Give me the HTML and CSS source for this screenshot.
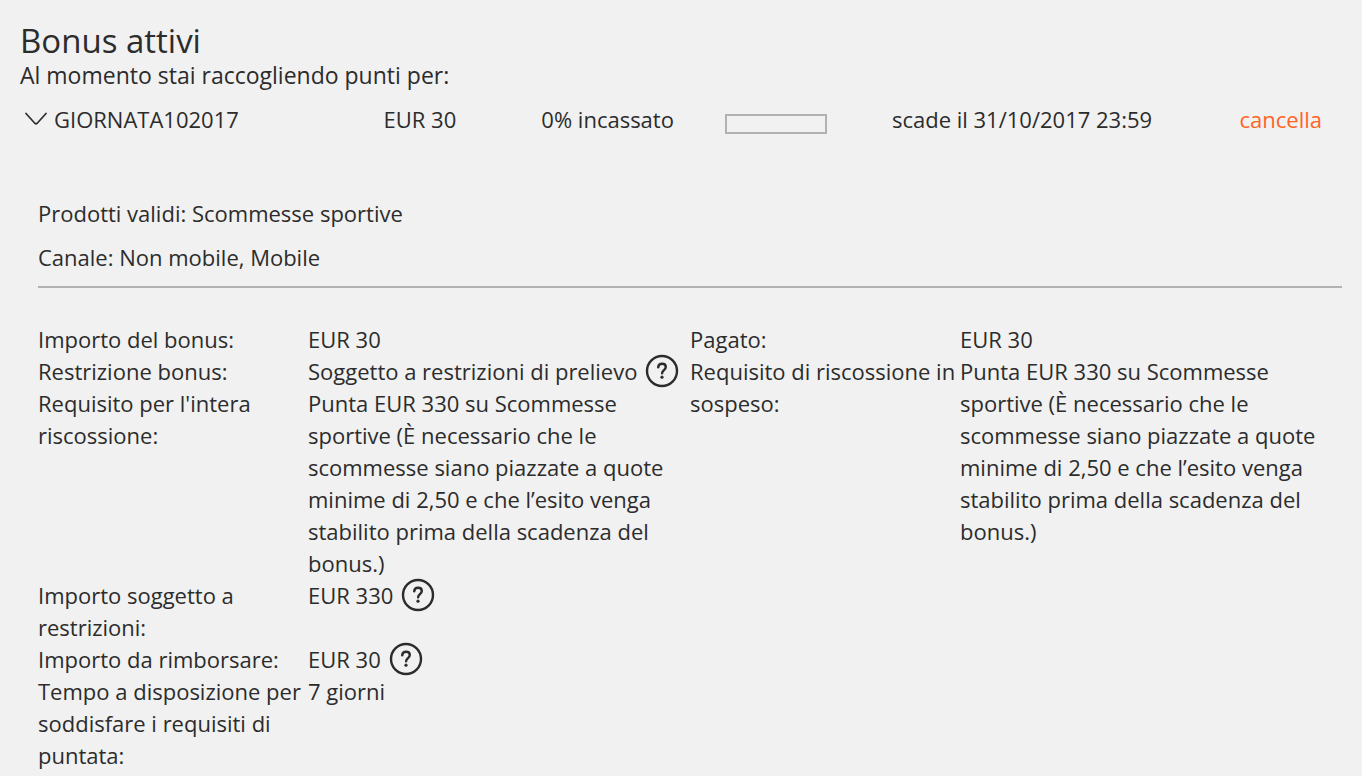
FILE: index.html
```html
<!DOCTYPE html>
<html lang="it">
<head>
<meta charset="utf-8">
<meta name="viewport" content="width=device-width, initial-scale=1">
<title>Bonus attivi</title>
<link rel="stylesheet" href="styles.css">
</head>
<body>
<svg class="sprite" aria-hidden="true">
  <symbol id="help" viewBox="0 0 34 34">
    <circle cx="17" cy="17" r="15" fill="none" stroke="currentColor" stroke-width="2.400"/>
    <path d="M13.200 13.400C13.300 11 14.800 9.800 17.100 9.800c2.300 0 3.700 1.300 3.700 3.200 0 3-3.700 3.100-3.700 6.200" fill="none" stroke="currentColor" stroke-width="2.400" stroke-linecap="round"/>
    <circle cx="17" cy="23.200" r="1.600" fill="currentColor"/>
  </symbol>
</svg>
<main class="page">
  <h1 class="title">Bonus attivi</h1>
  <p class="intro">Al momento stai raccogliendo punti per:</p>

  <section class="bonus">
    <div class="summary">
      <button class="toggle" type="button" aria-expanded="true" aria-controls="details">
        <svg class="chevron" viewBox="0 0 22 14" aria-hidden="true"><path d="M1 1.500 9.800 11.200Q11 12.400 12.200 11.200L21 1.500" fill="none" stroke="currentColor" stroke-width="1.700" stroke-linecap="round"/></svg>
        <span>GIORNATA102017</span>
      </button>
      <span>EUR 30</span>
      <span id="progress-label">0% incassato</span>
      <div class="meter" role="progressbar" aria-labelledby="progress-label" aria-valuenow="0" aria-valuemin="0" aria-valuemax="100"></div>
      <span>scade il 31/10/2017 23:59</span>
      <a class="cancel" href="#">cancella</a>
    </div>

    <div class="details" id="details">
      <p class="scope">Prodotti validi: Scommesse sportive</p>
      <p class="scope">Canale: Non mobile, Mobile</p>
      <hr class="rule">
      <div class="columns">
        <dl class="terms">
          <dt>Importo del bonus:</dt>
          <dd>EUR 30</dd>
          <dt>Restrizione bonus:</dt>
          <dd class="with-help">Soggetto a restrizioni di prelievo <button class="help" type="button" aria-label="Aiuto"><svg class="help-icon" aria-hidden="true"><use href="#help"/></svg></button></dd>
          <dt>Requisito per l'intera riscossione:</dt>
          <dd>Punta EUR 330 su Scommesse sportive (È necessario che le scommesse siano piazzate a quote minime di 2,50 e che l’esito venga stabilito prima della scadenza del bonus.)</dd>
          <dt>Importo soggetto a restrizioni:</dt>
          <dd class="with-help">EUR 330 <button class="help" type="button" aria-label="Aiuto"><svg class="help-icon" aria-hidden="true"><use href="#help"/></svg></button></dd>
          <dt>Importo da rimborsare:</dt>
          <dd class="with-help">EUR 30 <button class="help" type="button" aria-label="Aiuto"><svg class="help-icon" aria-hidden="true"><use href="#help"/></svg></button></dd>
          <dt>Tempo a disposizione per soddisfare i requisiti di puntata:</dt>
          <dd>7 giorni</dd>
        </dl>
        <dl class="terms">
          <dt>Pagato:</dt>
          <dd>EUR 30</dd>
          <dt>Requisito di riscossione in sospeso:</dt>
          <dd>Punta EUR 330 su Scommesse sportive (È necessario che le scommesse siano piazzate a quote minime di 2,50 e che l’esito venga stabilito prima della scadenza del bonus.)</dd>
        </dl>
      </div>
    </div>
  </section>
</main>
</body>
</html>
```
FILE: styles.css
```css
* {
  box-sizing: border-box;
  margin: 0;
  padding: 0;
}

body {
  background: #f1f1f1;
  color: #2c2c2c;
  font: 22px/32px "Open Sans", "Noto Sans", sans-serif;
}

button {
  border: 0;
  background: none;
  color: inherit;
  font: inherit;
  cursor: pointer;
}

.sprite {
  display: none;
}

.page {
  padding: 22px 20px 4px;
}

.title {
  font-size: 33px;
  font-weight: 400;
  line-height: 38px;
}

.intro {
  font-size: 23px;
  line-height: 30px;
}

.summary {
  display: grid;
  grid-template-columns: 364fr 158fr 184fr 167fr 348fr auto;
  align-items: center;
  margin-top: 13px;
  padding-right: 20px;
}

.toggle {
  display: flex;
  align-items: center;
  gap: 7px;
  padding-left: 5px;
}

.chevron {
  width: 22px;
  height: 14px;
}

.meter {
  width: 102px;
  height: 20px;
  margin-top: 10px;
  border: 2px solid #b2b2b2;
}

.cancel {
  color: #ff6427;
  text-decoration: none;
}

.details {
  padding: 62px 0 0 18px;
}

.scope {
  margin-bottom: 12px;
}

.rule {
  margin-top: 13px;
  border: 0;
  border-top: 2px solid #b2b2b2;
}

.columns {
  display: grid;
  grid-template-columns: 1fr 1fr;
  align-items: start;
  margin-top: 35px;
}

.terms {
  display: grid;
  grid-template-columns: 270px 1fr;
}

.terms dd {
  padding-right: 8px;
}

.terms .with-help {
  display: flex;
  align-items: center;
  gap: 8px;
  height: 32px;
  padding-right: 0;
}

.help {
  display: flex;
  flex: none;
}

.help-icon {
  width: 34px;
  height: 34px;
}
```
